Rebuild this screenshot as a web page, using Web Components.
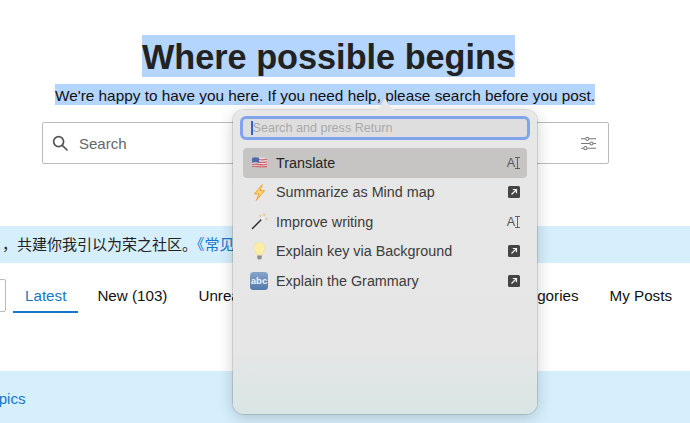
<!DOCTYPE html>
<html>
<head>
<meta charset="utf-8">
<title>Where possible begins</title>
<style>
  html, body { margin: 0; padding: 0; background: #fff; }
  body { width: 690px; height: 423px; overflow: hidden; position: relative; font-family: "Liberation Sans", "Noto Sans CJK SC", sans-serif; color: #222; }
</style>
</head>
<body>
<hero-title>
  <span slot="title">Where possible begins</span>
  <span slot="sub">We're happy to have you here. If you need help, please search before you post.</span>
</hero-title>
<search-bar placeholder="Search"></search-bar>
<notice-bar>，共建你我引以为荣之社区。<a>《常见问题》</a></notice-bar>
<nav-tabs>
  <nav-tab active>Latest</nav-tab>
  <nav-tab>New (103)</nav-tab>
  <nav-tab>Unread</nav-tab>
  <nav-tab style="margin-left:auto">Categories</nav-tab>
  <nav-tab>My Posts</nav-tab>
</nav-tabs>
<topic-band>topics</topic-band>

<command-popup>
  <command-item active icon="flag" action="write">Translate</command-item>
  <command-item icon="bolt" action="open">Summarize as Mind map</command-item>
  <command-item icon="wand" action="write">Improve writing</command-item>
  <command-item icon="bulb" action="open">Explain key via Background</command-item>
  <command-item icon="abc" action="open">Explain the Grammary</command-item>
</command-popup>

<script>
class HeroTitle extends HTMLElement {
  constructor() {
    super();
    this.attachShadow({ mode: 'open' });
    this.shadowRoot.innerHTML = `
      <style>
        :host { display: flex; flex-direction: column; align-items: center; padding: 35px 40px 0 0; }
        .title { display: block; height: 42px; margin-left: 7px; line-height: 45px; font-size: 34.25px; font-weight: 700; color: #222; background: #b4d5fe; white-space: nowrap; }
        .sub { display: block; height: 21px; line-height: 23px; margin-top: 7px; font-size: 15.35px; color: #111; background: #b4d5fe; white-space: nowrap; }
      </style>
      <span class="title"><slot name="title"></slot></span>
      <span class="sub"><slot name="sub"></slot></span>
    `;
  }
}

class SearchBar extends HTMLElement {
  constructor() {
    super();
    this.attachShadow({ mode: 'open' });
  }
  connectedCallback() {
    this.shadowRoot.innerHTML = `
      <style>
        :host { display: flex; align-items: center; box-sizing: border-box; height: 42px; margin: 17px 0 0 42px; width: 567px; padding: 0 12px 0 9px; background: #fff; border: 1px solid #bbb; border-radius: 2px; }
        svg { display: block; flex: none; }
        span { margin-left: 11px; font-size: 15px; color: #666; flex: 1; }
      </style>
      <svg width="16" height="16" viewBox="0 0 16 16" fill="none" stroke="#555" stroke-width="1.7">
        <circle cx="6.6" cy="6.6" r="5"/><path d="M10.3 10.3 15 15" stroke-linecap="round"/>
      </svg>
      <span>${this.getAttribute('placeholder')}</span>
      <svg width="15" height="15" viewBox="0 0 16 15" fill="none" stroke="#777" stroke-width="1.1">
        <path d="M0 2.5h5M8.5 2.5H16M0 7.5h9.500M13 7.5h3M0 12.5h3M6.5 12.5H16"/>
        <circle cx="6.7" cy="2.5" r="1.7"/><circle cx="11.2" cy="7.5" r="1.7"/><circle cx="4.7" cy="12.5" r="1.7"/>
      </svg>
    `;
  }
}

class NoticeBar extends HTMLElement {
  constructor() {
    super();
    this.attachShadow({ mode: 'open' });
    this.shadowRoot.innerHTML = `
      <style>
        :host { display: block; box-sizing: border-box; height: 37px; margin-top: 62px; padding-left: 2px; line-height: 37px; font-size: 15px; background: #d6effc; color: #222; white-space: nowrap; overflow: hidden; }
        ::slotted(a) { color: #1677c9; }
      </style>
      <slot></slot>
    `;
  }
}

class NavTabs extends HTMLElement {
  constructor() {
    super();
    this.attachShadow({ mode: 'open' });
    this.shadowRoot.innerHTML = `
      <style>
        :host { display: flex; align-items: stretch; gap: 7px; height: 34px; margin-top: 16px; padding-right: 6px; }
        .select { flex: none; box-sizing: border-box; width: 36px; margin: 0 0 1px -30px; background: #fff; border: 1px solid #bbb; border-radius: 2px; }
      </style>
      <div class="select"></div>
      <slot></slot>
    `;
  }
}

class NavTab extends HTMLElement {
  constructor() {
    super();
    this.attachShadow({ mode: 'open' });
    this.shadowRoot.innerHTML = `
      <style>
        :host { display: block; box-sizing: border-box; padding: 0 12px; line-height: 33px; font-size: 15.2px; color: #111; white-space: nowrap; border-bottom: 2px solid transparent; }
        :host([active]) { color: #1677c9; border-bottom-color: #1677c9; }
      </style>
      <slot></slot>
    `;
  }
}

class TopicBand extends HTMLElement {
  constructor() {
    super();
    this.attachShadow({ mode: 'open' });
    this.shadowRoot.innerHTML = `
      <style>
        :host { display: block; height: 52px; margin: 58px 0 0 -14px; padding-top: 19px; box-sizing: border-box; line-height: 18px; font-size: 15.2px; background: #d6effc; color: #1677c9; }
      </style>
      <slot></slot>
    `;
  }
}

class CommandPopup extends HTMLElement {
  constructor() {
    super();
    this.attachShadow({ mode: 'open' });
    this.shadowRoot.innerHTML = `
      <style>
        :host { position: absolute; left: 233px; top: 110px; width: 304px; height: 304px; box-sizing: border-box; padding: 7px 7px 0; display: block; border-radius: 11px; background: linear-gradient(#e7e7e7 0, #e6e6e6 78%, #d9e6e4 100%); box-shadow: 0 0 0 1px rgba(0,0,0,.12), 0 3px 16px rgba(0,0,0,.2); font-family: "Liberation Sans", sans-serif; }
        .arrow { position: absolute; left: 137px; top: -12px; display: block; }
        .field { box-sizing: border-box; height: 24px; margin-top: -1px; padding-left: 8px; display: flex; align-items: center; border: 3px solid #7fa5ec; border-radius: 6px; background: #dedede; font-size: 12.6px; color: #a9a9a9; }
        .caret { width: 1.5px; height: 14px; background: #2b62d9; }
        .list { display: flex; flex-direction: column; margin: 8px 3px 0; }
      </style>
      <svg class="arrow" width="30" height="13" viewBox="0 0 30 13">
        <path d="M0 13C6 13 9 11 11.500 6C13 3 14 1 15 1C16 1 17 3 18.500 6C21 11 24 13 30 13Z" fill="#e7e7e7"/>
      </svg>
      <div class="field"><span class="caret"></span>Search and press Return</div>
      <div class="list"><slot></slot></div>
    `;
  }
}

const ITEM_ICONS = {
  flag: `<svg width="17" height="13" viewBox="0 0 18 14"><path d="M1 2C6 0 11 3 17 1.500V12C11 13.500 6 10.500 1 12.500Z" fill="#e4dfe2"/><path d="M8 3.500C11 4.500 14 4.200 17 3.400M8 6.300C11 7.300 14 7 17 6.200M1 9.200C6 7.700 11 10.700 17 9M1 11.500C6 10 11 13 17 11.200" stroke="#d2626c" stroke-width="1.400" fill="none"/><path d="M1 2C3.500 1 6 1.100 8.500 1.800V7.300C6 6.500 3.500 6.300 1 7.400Z" fill="#4a68ac"/></svg>`,
  bolt: `<svg width="13" height="17" viewBox="0 0 14 18"><path d="M10 .5 1.500 10.500H6.500L3.500 17.500 12.500 7H7.500Z" fill="#fad66c" stroke="#f0a030" stroke-width="1" stroke-linejoin="round"/></svg>`,
  wand: `<svg width="17" height="17" viewBox="0 0 18 18"><path d="M1.500 16.500 11 7" stroke="#2a2a2a" stroke-width="1.500" stroke-linecap="round"/><path d="M11 7 13.500 4.500" stroke="#f4f4f4" stroke-width="2"/><path d="M14 .5v3M12.500 2h3M16.500 5v2.500M15.300 6.200h2.400M10 2v2M9 3h2" stroke="#e6c27c" stroke-width=".9"/></svg>`,
  bulb: `<svg width="13" height="18" viewBox="0 0 14 20"><path d="M7 .5C3.200.5.800 3.200.8 6.500.8 9.500 3.500 11 4.200 14.500H9.800C10.500 11 13.200 9.500 13.200 6.500 13.200 3.200 10.800.5 7 .5Z" fill="#fbeca6" stroke="#f3dc8e" stroke-width=".6"/><path d="M4.500 15h5v3L8 19.500H6L4.500 18Z" fill="#8a8d91"/></svg>`,
  abc: `<span class="abc">abc</span>`
};

class CommandItem extends HTMLElement {
  constructor() {
    super();
    this.attachShadow({ mode: 'open' });
  }
  connectedCallback() {
    const action = this.getAttribute('action') === 'open'
      ? `<svg width="12" height="12" viewBox="0 0 12 12"><rect width="12" height="12" rx="1.500" fill="#444"/><path d="M3.500 8.500 8 4M4.800 3.500H8.500V7.200" stroke="#f2f2f2" stroke-width="1.200" fill="none"/></svg>`
      : `<span class="write">A<svg width="5" height="12" viewBox="0 0 5 12" fill="none" stroke="#555" stroke-width=".9"><path d="M0 .5h5M2.500 .5v11M0 11.500h5"/></svg></span>`;
    this.shadowRoot.innerHTML = `
      <style>
        :host { display: flex; align-items: center; box-sizing: border-box; height: 29.5px; padding: 0 7px 0 6px; border-radius: 4px; font-size: 14.35px; color: #3c3c3c; white-space: nowrap; }
        :host([active]) { background: #c6c5c3; color: #262626; }
        .icon { flex: none; width: 20px; display: flex; justify-content: center; align-items: center; margin-right: 7px; }
        .label { flex: 1; }
        .abc { display: block; width: 18px; height: 18px; line-height: 18px; text-align: center; border-radius: 3.500px; background: linear-gradient(#86a4c9, #527aab); color: #eef3f9; font-size: 9.500px; font-weight: 700; }
        .write { display: flex; align-items: center; font-size: 12.500px; color: #555; }
        .action { flex: none; width: 14px; display: flex; justify-content: flex-end; }
      </style>
      <span class="icon">${ITEM_ICONS[this.getAttribute('icon')]}</span>
      <span class="label"><slot></slot></span>
      <span class="action">${action}</span>
    `;
  }
}

customElements.define('hero-title', HeroTitle);
customElements.define('search-bar', SearchBar);
customElements.define('notice-bar', NoticeBar);
customElements.define('nav-tabs', NavTabs);
customElements.define('nav-tab', NavTab);
customElements.define('topic-band', TopicBand);
customElements.define('command-popup', CommandPopup);
customElements.define('command-item', CommandItem);
</script>
</body>
</html>
